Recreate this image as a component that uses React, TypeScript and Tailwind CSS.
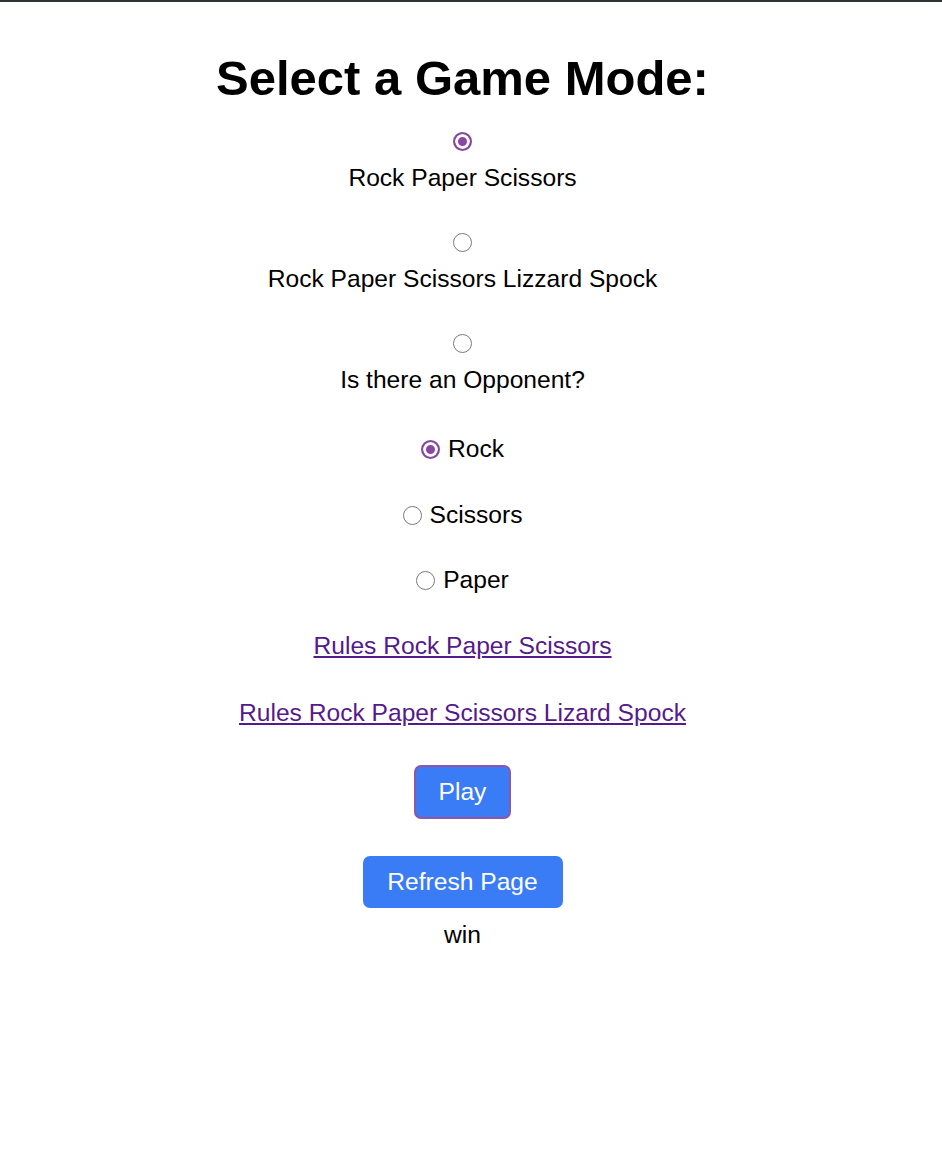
import { useState } from "react";

type RadioProps = {
  name: string;
  value: string;
  checked: boolean;
  onChange: (value: string) => void;
};

const Radio = ({ name, value, checked, onChange }: RadioProps) => (
  <input
    type="radio"
    name={name}
    value={value}
    checked={checked}
    onChange={() => onChange(value)}
    className="appearance-none block w-[19px] h-[19px] m-0 rounded-full border-[1.5px] border-[#7a7a7a] bg-white checked:border-[2px] checked:border-[#8b46a3] checked:bg-[#8b46a3] checked:shadow-[inset_0_0_0_3px_white] cursor-pointer"
  />
);

export default function App() {
  const [mode, setMode] = useState("rps");
  const [move, setMove] = useState("rock");
  const [result] = useState("win");

  return (
    <div className="min-h-[1156px] bg-white border-t-2 border-[#2f3236] font-['Liberation_Sans',Arial,sans-serif] text-black">
      <div className="w-[925px] flex flex-col items-center text-[24.6px] leading-[28px]">
        <h1 className="mt-[48px] text-[49px] leading-[56px] font-bold">
          Select a Game Mode:
        </h1>

        <div className="mt-[26px]">
          <Radio name="mode" value="rps" checked={mode === "rps"} onChange={setMode} />
        </div>
        <label className="mt-[13px]">Rock Paper Scissors</label>

        <div className="mt-[41px]">
          <Radio name="mode" value="rpsls" checked={mode === "rpsls"} onChange={setMode} />
        </div>
        <label className="mt-[13px]">Rock Paper Scissors Lizzard Spock</label>

        <div className="mt-[41px]">
          <Radio name="mode" value="opponent" checked={mode === "opponent"} onChange={setMode} />
        </div>
        <label className="mt-[13px]">Is there an Opponent?</label>

        <div className="mt-[41px] flex items-center gap-[8px]">
          <Radio name="move" value="rock" checked={move === "rock"} onChange={setMove} />
          <span>Rock</span>
        </div>
        <div className="mt-[38px] flex items-center gap-[8px]">
          <Radio name="move" value="scissors" checked={move === "scissors"} onChange={setMove} />
          <span>Scissors</span>
        </div>
        <div className="mt-[37px] flex items-center gap-[8px]">
          <Radio name="move" value="paper" checked={move === "paper"} onChange={setMove} />
          <span>Paper</span>
        </div>

        <a href="#" className="mt-[38px] text-[#551a8b] underline">
          Rules Rock Paper Scissors
        </a>
        <a href="#" className="mt-[39px] text-[#551a8b] underline">
          Rules Rock Paper Scissors Lizard Spock
        </a>

        <button className="mt-[38px] w-[97px] h-[54px] rounded-[7px] border-2 border-[#8e58a6] bg-[#3a7bf6] text-white">
          Play
        </button>
        <button
          onClick={() => window.location.reload()}
          className="mt-[37px] w-[200px] h-[52px] rounded-[7px] bg-[#3a7bf6] text-white"
        >
          Refresh Page
        </button>
        <p className="mt-[13px]">{result}</p>
      </div>
    </div>
  );
}
